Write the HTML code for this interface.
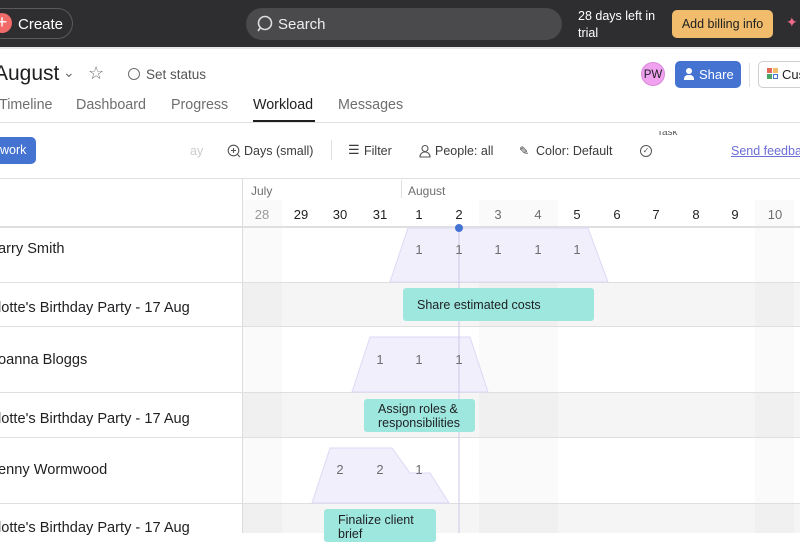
<!DOCTYPE html>
<html><head><meta charset="utf-8"><style>
*{margin:0;padding:0;box-sizing:border-box}
body{width:800px;height:533px;overflow:hidden;position:relative;background:#fff;font-family:"Liberation Sans",sans-serif;color:#1e1f21}
.a{position:absolute;white-space:nowrap}
.top{left:0;top:0;width:800px;height:47px;background:#2e2e30}
.g{color:#6d6e6f}
.d{font-size:13px;width:40px;text-align:center;top:207px}
.hl{height:1px;background:#e0dfdf;left:0;width:800px}
.bar{background:#9ee7df;border-radius:3px;font-size:12.5px;color:#1e1f21;padding:0 14px;line-height:14px;display:flex;align-items:center}
.n{font-size:13px;color:#6d6e6f;width:20px;text-align:center}
.tb{font-size:12.5px;color:#3a3b3c;top:144px}
.nm{font-size:14.6px}
</style></head><body>
<div class="a top"></div>
<div class="a" style="left:-20px;top:8px;width:93px;height:31px;border:1px solid #5a5a5c;border-radius:16px"></div>
<div class="a" style="left:-8px;top:13px;width:20px;height:20px;border-radius:50%;background:#f06a6a;color:#fff;font-size:18px;line-height:19px;text-align:center">+</div>
<div class="a" style="left:18px;top:16px;color:#fff;font-size:15px">Create</div>
<div class="a" style="left:246px;top:8px;width:316px;height:32px;border-radius:16px;background:#4a4a4c"></div>
<svg class="a" style="left:256px;top:14px" width="20" height="20" viewBox="0 0 20 20"><circle cx="9" cy="9" r="6.5" fill="none" stroke="#ddd" stroke-width="1.6"/><path d="M4.5 13.5L2 17" stroke="#ddd" stroke-width="1.6"/></svg>
<div class="a" style="left:278px;top:16px;color:#eee;font-size:15px">Search</div>
<div class="a" style="left:578px;top:8px;color:#fff;font-size:12.5px;line-height:17px">28 days left in<br>trial</div>
<div class="a" style="left:672px;top:10px;width:101px;height:28px;background:#f1bd6c;border-radius:5px;font-size:12.5px;line-height:28px;text-align:center">Add billing info</div>
<div class="a" style="left:786px;top:14px;color:#f06a8a;font-size:14px">✦</div>
<div class="a" style="left:0;top:47px;width:800px;height:2px;background:#e8e8e8"></div>
<div class="a" style="left:-6px;top:62px;font-size:21px">August</div>
<div class="a g" style="left:63px;top:64px;font-size:14px">⌄</div>
<div class="a g" style="left:88px;top:63px;font-size:18px">☆</div>
<div class="a" style="left:128px;top:68px;width:12px;height:12px;border:1.3px solid #6d6e6f;border-radius:50%"></div>
<div class="a g" style="left:146px;top:67px;font-size:13.5px;color:#555">Set status</div>
<div class="a" style="left:641px;top:62px;width:24px;height:24px;border-radius:50%;background:#f0a1f0;font-size:11.5px;line-height:24px;text-align:center;border:1px solid #d88ad8">PW</div>
<div class="a" style="left:675px;top:61px;width:66px;height:27px;border-radius:5px;background:#4573d2;color:#fff;font-size:13px;line-height:27px;padding-left:24px">Share</div>
<div class="a" style="left:684px;top:68px;width:10px;height:12px"><div style="width:6px;height:6px;border-radius:50%;background:#fff;margin-left:2px"></div><div style="width:10px;height:5px;background:#fff;border-radius:4px 4px 0 0;margin-top:1px"></div></div>
<div class="a" style="left:749px;top:63px;width:1px;height:24px;background:#e0e0e0"></div>
<div class="a" style="left:758px;top:61px;width:60px;height:27px;border:1px solid #cfcfcf;border-radius:5px"></div>
<div class="a" style="left:767px;top:68px;width:5px;height:5px;background:#e36a5a"></div><div class="a" style="left:773px;top:68px;width:5px;height:5px;background:#f1bd6c"></div><div class="a" style="left:767px;top:74px;width:5px;height:5px;background:#4aa56a"></div><div class="a" style="left:773px;top:74px;width:5px;height:5px;border:1px solid #4573d2"></div>
<div class="a" style="left:782px;top:67px;font-size:13px">Cus</div>
<div class="a g" style="left:-1px;top:97px;font-size:14.3px">Timeline</div>
<div class="a g" style="left:76px;top:97px;font-size:14.3px">Dashboard</div>
<div class="a g" style="left:171px;top:97px;font-size:14.3px">Progress</div>
<div class="a" style="left:253px;top:97px;font-size:14.3px">Workload</div>
<div class="a" style="left:253px;top:120px;width:62px;height:2px;background:#1e1f21"></div>
<div class="a g" style="left:338px;top:97px;font-size:14.3px">Messages</div>
<div class="a hl" style="top:122px"></div>
<div class="a" style="left:-10px;top:137px;width:46px;height:27px;background:#4573d2;border-radius:5px;color:#fff;font-size:12.5px;line-height:27px;padding-left:10px">work</div>
<div class="a tb" style="left:190px;color:#ccc">ay</div>
<svg class="a" style="left:227px;top:144px" width="14" height="14" viewBox="0 0 14 14"><circle cx="6.5" cy="6.5" r="5.3" fill="none" stroke="#555" stroke-width="1.1"/><path d="M4 6.5h5M6.5 4v5M10.5 10.5l2.5 2.5" stroke="#555" stroke-width="1.1"/></svg>
<div class="a tb" style="left:244px">Days (small)</div>
<div class="a" style="left:331px;top:140px;width:1px;height:20px;background:#e0e0e0"></div>
<div class="a tb" style="left:348px;font-size:13px;top:142px">☰</div>
<div class="a tb" style="left:364px">Filter</div>
<svg class="a" style="left:419px;top:144px" width="12" height="14" viewBox="0 0 12 14"><circle cx="6" cy="4.5" r="3" fill="none" stroke="#555" stroke-width="1.1"/><path d="M1 13c0-3 2-5 5-5s5 2 5 5z" fill="none" stroke="#555" stroke-width="1.1"/></svg>
<div class="a tb" style="left:435px">People: all</div>
<div class="a tb" style="left:519px;font-size:12px">✎</div>
<div class="a tb" style="left:536px">Color: Default</div>
<div class="a" style="left:640px;top:145px;width:12px;height:12px;border:1.1px solid #555;border-radius:50%;font-size:8px;line-height:10px;text-align:center;color:#555">✓</div>
<div class="a" style="left:657px;top:131px;font-size:10px;color:#555;height:6px;overflow:hidden;line-height:4px">Task</div>
<div class="a" style="left:731px;top:144px;font-size:12.5px;color:#6d6ed6;text-decoration:underline">Send feedback</div>
<div class="a hl" style="top:178px"></div>
<div class="a" style="left:243px;top:179px;width:557px;height:354px;background:#fff"></div>
<div class="a" style="left:243px;top:282px;width:557px;height:45px;background:#f6f5f5"></div>
<div class="a" style="left:243px;top:393px;width:557px;height:44px;background:#f6f5f5"></div>
<div class="a" style="left:243px;top:503px;width:557px;height:30px;background:#f6f5f5"></div>
<div class="a" style="left:243px;top:200px;width:39px;height:333px;background:rgba(0,0,0,0.018)"></div>
<div class="a" style="left:479px;top:200px;width:79px;height:333px;background:rgba(0,0,0,0.018)"></div>
<div class="a" style="left:755px;top:200px;width:39px;height:333px;background:rgba(0,0,0,0.018)"></div>
<div class="a" style="left:242px;top:179px;width:1px;height:354px;background:#dcdcdc"></div>
<div class="a" style="left:401px;top:180px;width:1px;height:18px;background:#e0e0e0"></div>
<div class="a g" style="left:251px;top:184px;font-size:12px">July</div>
<div class="a g" style="left:408px;top:184px;font-size:12px">August</div>
<div class="a d" style="left:242px;color:#999">28</div>
<div class="a d" style="left:281px">29</div>
<div class="a d" style="left:320px">30</div>
<div class="a d" style="left:360px">31</div>
<div class="a d" style="left:399px">1</div>
<div class="a d" style="left:439px">2</div>
<div class="a d" style="left:478px;color:#6d6e6f">3</div>
<div class="a d" style="left:518px;color:#6d6e6f">4</div>
<div class="a d" style="left:557px">5</div>
<div class="a d" style="left:597px">6</div>
<div class="a d" style="left:636px">7</div>
<div class="a d" style="left:676px">8</div>
<div class="a d" style="left:715px">9</div>
<div class="a d" style="left:755px;color:#6d6e6f">10</div>
<div class="a hl" style="top:226px;height:2px"></div>
<div class="a hl" style="top:282px"></div>
<div class="a hl" style="top:326px"></div>
<div class="a hl" style="top:392px"></div>
<div class="a hl" style="top:437px"></div>
<div class="a hl" style="top:503px"></div>
<svg class="a" style="left:0;top:0" width="800" height="533"><g fill="#eeecfb" fill-opacity="0.85" stroke="#dcd9f5" stroke-width="1">
<polygon points="408,228 588,228 608,282 390,282"/>
<polygon points="370,337 470,337 488,392 352,392"/>
<polygon points="330,448 392,448 410,473 430,473 449,503 312,503"/></g>
<line x1="459" y1="228" x2="459" y2="533" stroke="#c9c9e6" stroke-width="1"/>
<circle cx="459" cy="228" r="4" fill="#4573d2"/></svg>
<div class="a n" style="left:409px;top:242px">1</div><div class="a n" style="left:449px;top:242px">1</div><div class="a n" style="left:488px;top:242px">1</div><div class="a n" style="left:528px;top:242px">1</div><div class="a n" style="left:567px;top:242px">1</div>
<div class="a n" style="left:370px;top:352px">1</div><div class="a n" style="left:409px;top:352px">1</div><div class="a n" style="left:449px;top:352px">1</div>
<div class="a n" style="left:330px;top:462px">2</div><div class="a n" style="left:370px;top:462px">2</div><div class="a n" style="left:409px;top:462px">1</div>
<div class="a bar" style="left:403px;top:288px;width:191px;height:33px">Share estimated costs</div>
<div class="a bar" style="left:364px;top:399px;width:111px;height:33px">Assign roles &amp;<br>responsibilities</div>
<div class="a bar" style="left:324px;top:509px;width:112px;height:33px;align-items:flex-start;padding-top:4px">Finalize client<br>brief</div>
<div class="a nm" style="left:-2px;top:241px">arry Smith</div>
<div class="a nm" style="left:-2px;top:300px">lotte's Birthday Party - 17 Aug</div>
<div class="a nm" style="left:-2px;top:352px">oanna Bloggs</div>
<div class="a nm" style="left:-2px;top:411px">lotte's Birthday Party - 17 Aug</div>
<div class="a nm" style="left:-2px;top:462px">enny Wormwood</div>
<div class="a nm" style="left:-2px;top:520px">lotte's Birthday Party - 17 Aug</div>
</body></html>
